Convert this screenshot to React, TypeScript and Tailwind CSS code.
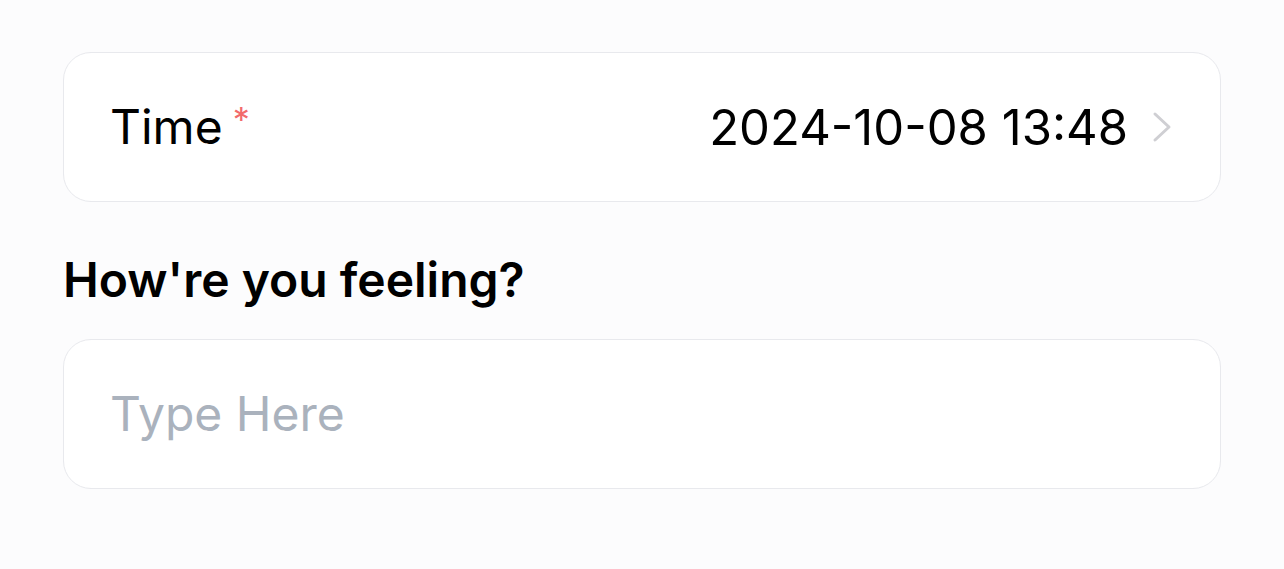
export default function App() {
  return (
    <div className="min-h-screen bg-[#fcfcfd] px-[63px] pt-[52px] font-['Inter',sans-serif] text-black">
      {/* Time row */}
      <div className="flex h-[150px] items-center justify-between rounded-[28px] border border-[#e8e9ed] bg-white pl-[46px] pr-[48px]">
        <div className="flex items-start">
          <span className="text-[48px] leading-none font-normal">Time</span>
          <span className="ml-[10px] text-[34px] leading-none text-[#f26b6b]">*</span>
        </div>
        <div className="flex items-center gap-[24px]">
          <span className="text-[49px] leading-none">2024-10-08 13:48</span>
          <svg width="20" height="32" viewBox="0 0 20 32" fill="none">
            <polyline
              points="3,3 17,16 3,29"
              stroke="#cfcfd3"
              strokeWidth="3"
              strokeLinecap="round"
              strokeLinejoin="round"
            />
          </svg>
        </div>
      </div>

      {/* Feeling */}
      <h2 className="mt-[50px] mb-[31px] text-[48px] leading-[56px] font-semibold">How're you feeling?</h2>
      <div className="flex h-[150px] items-center rounded-[28px] border border-[#e8e9ed] bg-white pl-[46px] pr-[48px]">
        <input
          placeholder="Type Here"
          className="w-full bg-transparent text-[48px] outline-none placeholder:text-[#aab2bd]"
        />
      </div>
    </div>
  );
}
